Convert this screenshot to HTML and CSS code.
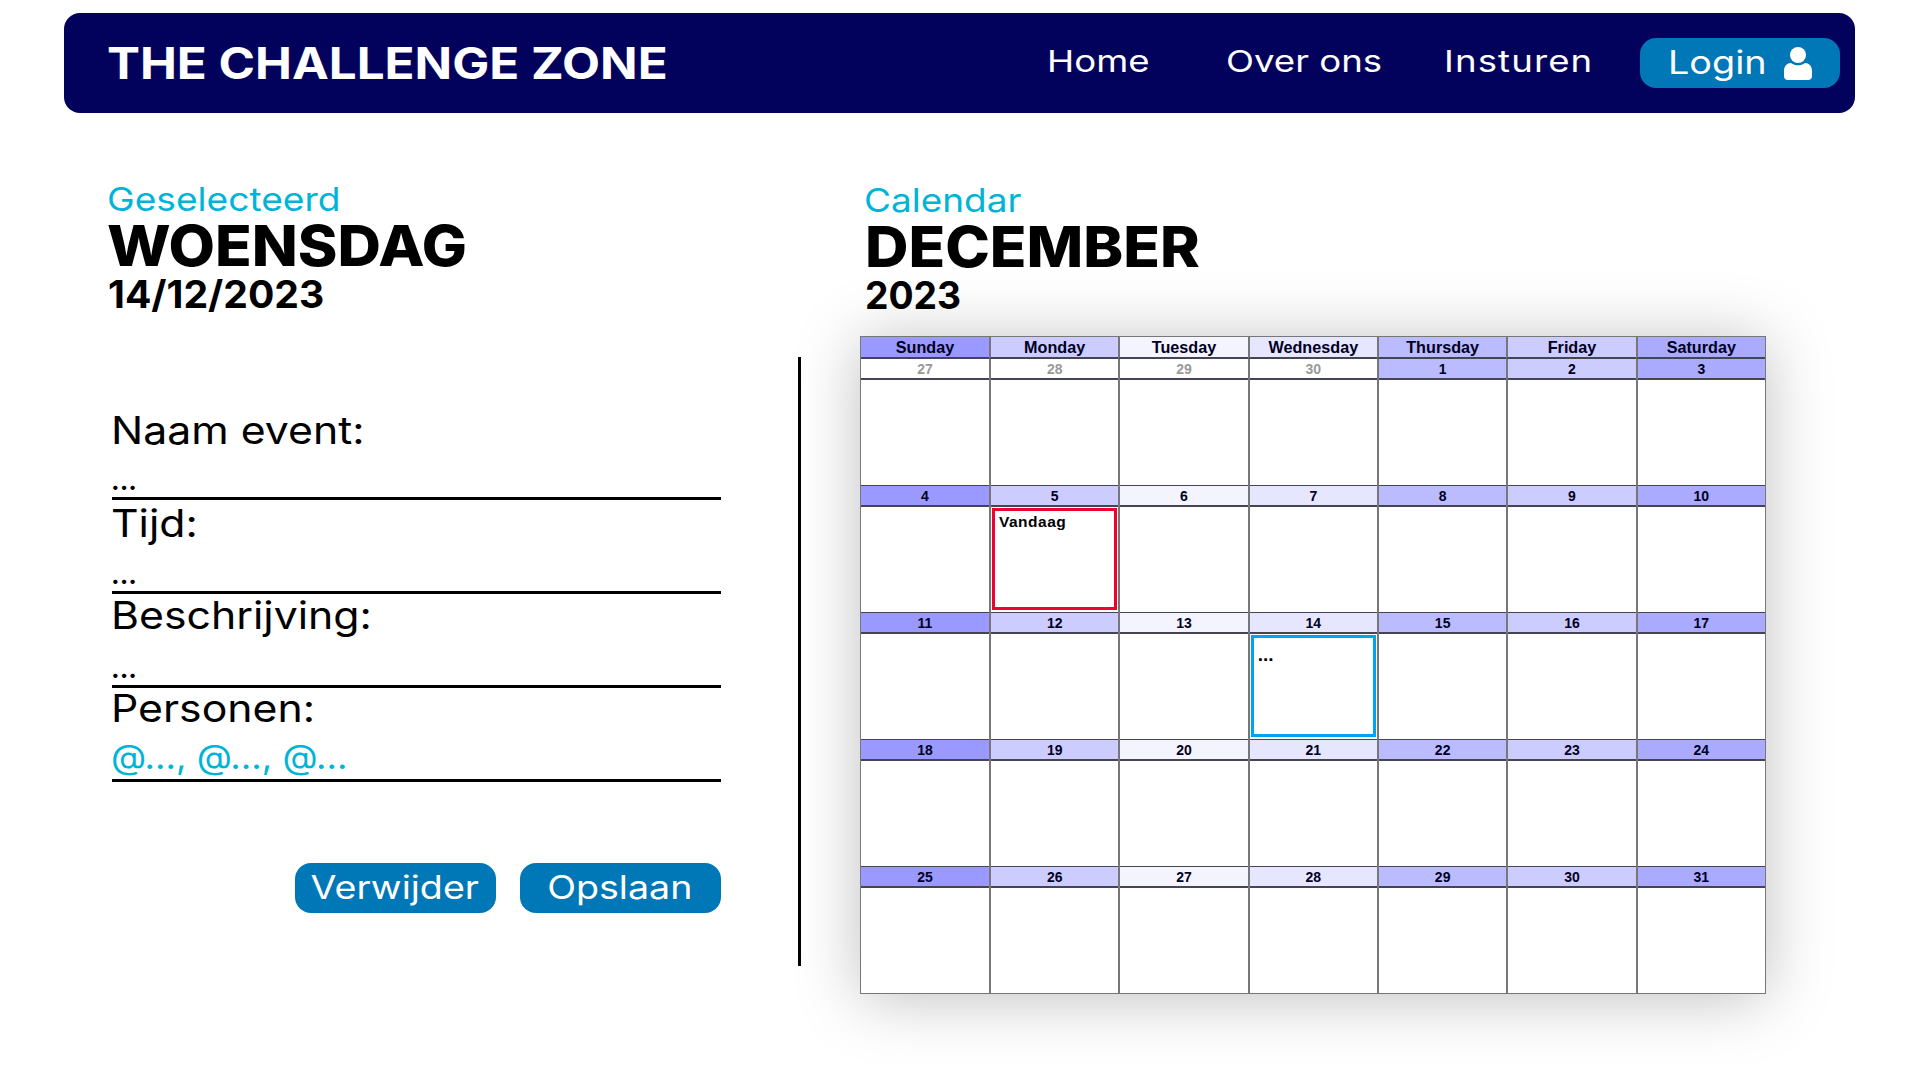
FILE: index.html
```html
<!DOCTYPE html>
<html lang="nl">
<head>
<meta charset="utf-8">
<title>The Challenge Zone</title>
<link rel="stylesheet" href="styles.css">
</head>
<body>
<header class="navbar">
  <div class="brand">THE CHALLENGE ZONE</div>
  <nav class="nav">
    <a class="nav-link nav-home">Home</a>
    <a class="nav-link nav-over">Over ons</a>
    <a class="nav-link nav-ins">Insturen</a>
    <a class="login"><span class="login-text">Login</span>
      <svg class="user-icon" viewBox="0 0 28 33" aria-hidden="true"><circle cx="14" cy="8" r="8" fill="#fff"/><path d="M0 24c0-5 3-8 7-8 2 1.500 4.500 2.300 7 2.300s5-.8 7-2.300c4 0 7 3 7 8v5c0 2.500-1.500 4-4 4H4c-2.500 0-4-1.500-4-4z" fill="#fff"/></svg>
    </a>
  </nav>
</header>
<main class="page">
  <section class="left">
    <div class="title-block">
      <div class="eyebrow">Geselecteerd</div>
      <h1 class="big">WOENSDAG</h1>
      <div class="sub">14/12/2023</div>
    </div>
    <form class="form">
      <div class="field"><div class="label">Naam event:</div><div class="value">...</div></div>
      <div class="field"><div class="label">Tijd:</div><div class="value">...</div></div>
      <div class="field"><div class="label">Beschrijving:</div><div class="value">...</div></div>
      <div class="field"><div class="label">Personen:</div><div class="value people">@..., @..., @...</div></div>
      <div class="actions"><button type="button" class="btn"><span class="btn-text">Verwijder</span></button><button type="button" class="btn"><span class="btn-text">Opslaan</span></button></div>
    </form>
  </section>
  <div class="divider"></div>
  <section class="right">
    <div class="title-block cal-title">
      <div class="eyebrow">Calendar</div>
      <h1 class="big">DECEMBER</h1>
      <div class="sub">2023</div>
    </div>
    <div class="calendar">
      <div class="head c0">Sunday</div><div class="head c1">Monday</div><div class="head c2">Tuesday</div><div class="head c3">Wednesday</div><div class="head c4">Thursday</div><div class="head c5">Friday</div><div class="head c6">Saturday</div>

      <div class="day"><div class="num muted">27</div><div class="body"></div></div>
      <div class="day"><div class="num muted">28</div><div class="body"></div></div>
      <div class="day"><div class="num muted">29</div><div class="body"></div></div>
      <div class="day"><div class="num muted">30</div><div class="body"></div></div>
      <div class="day"><div class="num first c4">1</div><div class="body"></div></div>
      <div class="day"><div class="num first c5">2</div><div class="body"></div></div>
      <div class="day"><div class="num first c6">3</div><div class="body"></div></div>

      <div class="day"><div class="num c0">4</div><div class="body"></div></div>
      <div class="day"><div class="num c1">5</div><div class="body"><div class="mark today">Vandaag</div></div></div>
      <div class="day"><div class="num c2">6</div><div class="body"></div></div>
      <div class="day"><div class="num c3">7</div><div class="body"></div></div>
      <div class="day"><div class="num c4">8</div><div class="body"></div></div>
      <div class="day"><div class="num c5">9</div><div class="body"></div></div>
      <div class="day"><div class="num c6">10</div><div class="body"></div></div>

      <div class="day"><div class="num c0">11</div><div class="body"></div></div>
      <div class="day"><div class="num c1">12</div><div class="body"></div></div>
      <div class="day"><div class="num c2">13</div><div class="body"></div></div>
      <div class="day"><div class="num c3">14</div><div class="body"><div class="mark selected">...</div></div></div>
      <div class="day"><div class="num c4">15</div><div class="body"></div></div>
      <div class="day"><div class="num c5">16</div><div class="body"></div></div>
      <div class="day"><div class="num c6">17</div><div class="body"></div></div>

      <div class="day"><div class="num c0">18</div><div class="body"></div></div>
      <div class="day"><div class="num c1">19</div><div class="body"></div></div>
      <div class="day"><div class="num c2">20</div><div class="body"></div></div>
      <div class="day"><div class="num c3">21</div><div class="body"></div></div>
      <div class="day"><div class="num c4">22</div><div class="body"></div></div>
      <div class="day"><div class="num c5">23</div><div class="body"></div></div>
      <div class="day"><div class="num c6">24</div><div class="body"></div></div>

      <div class="day"><div class="num c0">25</div><div class="body"></div></div>
      <div class="day"><div class="num c1">26</div><div class="body"></div></div>
      <div class="day"><div class="num c2">27</div><div class="body"></div></div>
      <div class="day"><div class="num c3">28</div><div class="body"></div></div>
      <div class="day"><div class="num c4">29</div><div class="body"></div></div>
      <div class="day"><div class="num c5">30</div><div class="body"></div></div>
      <div class="day"><div class="num c6">31</div><div class="body"></div></div>
    </div>
  </section>
</main>
</body>
</html>
```
FILE: styles.css
```css
* { box-sizing: border-box; }
html, body { margin: 0; height: 1080px; overflow: hidden; background: #fff; }
body { font-family: Inter, "Liberation Sans", sans-serif; color: #000; }

.navbar {
  display: flex; align-items: center; justify-content: space-between;
  height: 100px; margin: 13px 65px 0 64px; padding: 0 15px 0 43px;
  background: #02025c; border-radius: 16px; color: #fff;
}
.brand {
  font-size: 44px; font-weight: 700; line-height: 1; white-space: nowrap;
  transform: scaleX(1.122); transform-origin: left center;
}
.nav { display: flex; align-items: center; }
.nav-link {
  display: block; white-space: nowrap; font-size: 30px; line-height: 1;
  padding-bottom: 4px;
  transform: scaleX(1.22); transform-origin: left center;
}
.nav-home { width: 179px; }
.nav-over { width: 218px; }
.nav-ins { width: 196px; letter-spacing: .9px; }
.login {
  display: flex; align-items: center;
  width: 200px; height: 50px; padding-left: 28px;
  background: #0077b6; border-radius: 16px;
  font-size: 32px;
}
.login-text { width: 116px; padding-bottom: 2px; transform: scaleX(1.18); transform-origin: left center; }
.user-icon { width: 28px; height: 33px; flex: none; }

.page { display: flex; padding-left: 107px; }
.left { width: 614px; padding-top: 68px; }
.divider { width: 3px; height: 609px; margin: 244px 60px 0 77px; background: #000; }
.right { width: 905px; padding-top: 69px; }

.eyebrow { font-size: 33px; line-height: 36px; color: #00b4d8; transform: scaleX(1.125); transform-origin: left center; }
.big { margin: 0; font-size: 56px; font-weight: 800; line-height: 58px; transform: scaleX(1.074); transform-origin: left center; }
.sub { margin-left: 1px; font-size: 38px; font-weight: 700; line-height: 38px; transform: scaleX(1.03); transform-origin: left center; }
.title-block { height: 132px; }
.cal-title { margin-left: 4px; }
.cal-title .eyebrow { margin-left: -1px; transform: scaleX(1.12); }
.cal-title .sub { margin-left: 0; transform: scaleX(.98); }

.form { padding: 93px 0 0 5px; width: 614px; }
.field { height: 94px; border-bottom: 3px solid #000; display: flex; flex-direction: column; }
.label {
  margin: 2px 0 0 -1px; font-size: 38px; line-height: 44px; height: 44px; white-space: nowrap;
  transform: scaleX(1.125); transform-origin: left center;
}
.field:nth-child(2) .label { margin-top: 1px; }
.field:nth-child(3) .label { margin-top: -1px; }
.field:nth-child(4) .label { margin-top: -2px; }
.value { margin: auto 0 -4px -1px; font-size: 26px; line-height: 40px; font-weight: 700; }
.people {
  margin-bottom: 2px; font-size: 34px; color: #00b4d8; font-weight: 400;
  transform: scaleX(1.07); transform-origin: left center;
}
.actions { display: flex; justify-content: flex-end; gap: 24px; margin-top: 81px; }
.btn {
  width: 201px; height: 50px; border: 0; border-radius: 16px; padding: 0 2px 0 0;
  background: #0077b6; color: #fff;
  font: 400 32px/1 Inter, sans-serif;
}
.btn-text { display: inline-block; transform: scaleX(1.175); }

.calendar {
  display: grid; grid-template-columns: 128px repeat(6, 1fr);
  width: 906px; margin: 22px 0 0 -1px;
  border: 1px solid #777;
  background: #fff;
  box-shadow: 0 4px 60px rgba(0, 0, 0, .25);
  font-family: "Liberation Sans", Arial, sans-serif;
}
.head {
  height: 22px; line-height: 20px; text-align: center;
  font-size: 16.2px; font-weight: 700; color: #000022;
  border-left: 2px solid #777; border-bottom: 2px solid #445;
}
.head:nth-child(7n+1), .day:nth-child(7n+1) { border-left: 0; }
.day { border-left: 2px solid #777; min-width: 0; }
.num {
  height: 22px; line-height: 20px; text-align: center;
  font-size: 14px; font-weight: 700; color: #000022;
  border-top: 1px solid #445; border-bottom: 2px solid #445;
}
.num.muted, .num.first { height: 21px; border-top: 0; }
.num.muted { color: #999; }
.body { height: 105px; padding: 1px 0 2px 0; }
.mark {
  height: 100%; margin: 0 1px; padding: 2px 4px 0;
  font-size: 15.500px; font-weight: 700; line-height: 17px; color: #000;
  letter-spacing: .5px;
}
.today { border: 3px solid #f0002f; }
.selected { border: 3px solid #00a2f2; padding-top: 8px; font-size: 19px; letter-spacing: 0; }

.c0 { background: #9999ff; }
.c1 { background: #ccccff; }
.c2 { background: #f4f4ff; }
.c3 { background: #e6e6ff; }
.c4 { background: #bbbbff; }
.c5 { background: #ccccff; }
.c6 { background: #aaaaff; }
```
